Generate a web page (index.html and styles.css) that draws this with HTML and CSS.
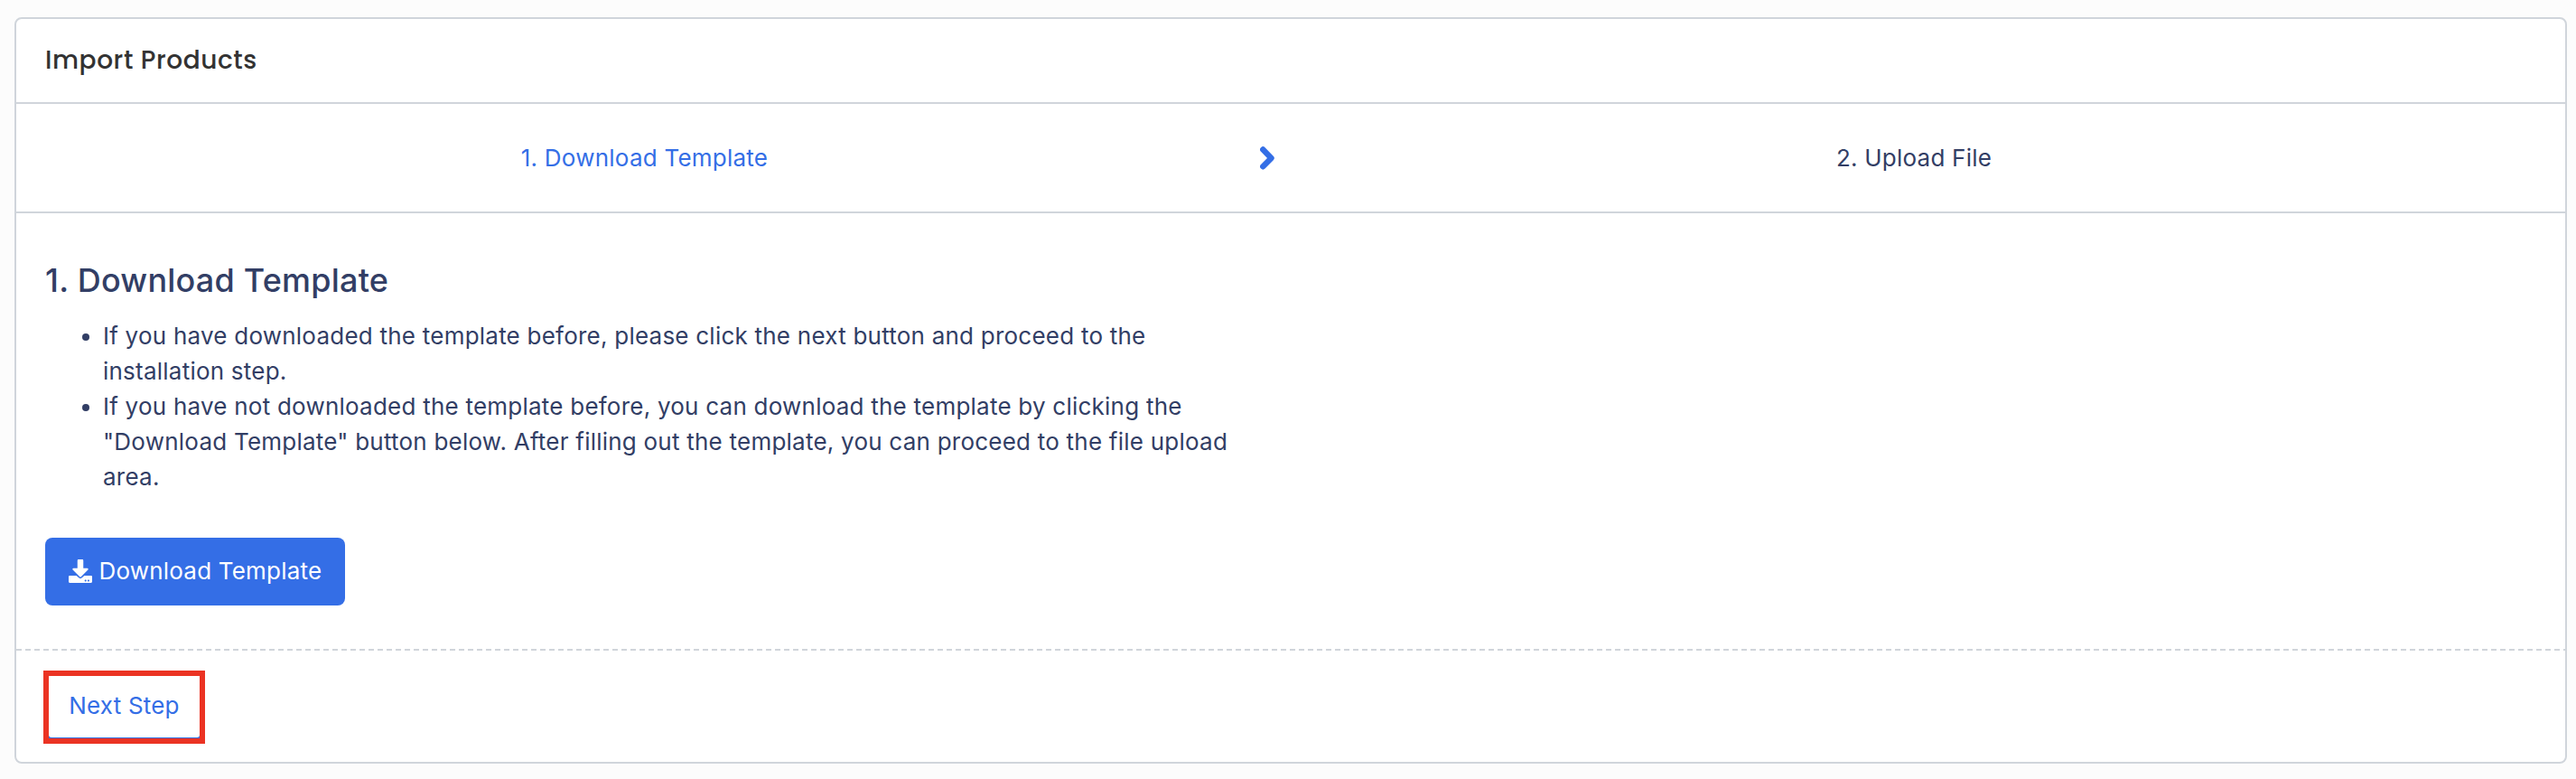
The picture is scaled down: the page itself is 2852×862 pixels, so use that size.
FILE: index.html
```html
<!DOCTYPE html>
<html lang="en">
<head>
<meta charset="utf-8">
<title>Import Products</title>
<link rel="stylesheet" href="styles.css">
</head>
<body>
<main class="card">
  <header class="card-header"><h1 class="card-title">Import Products</h1></header>
  <nav class="steps">
    <a class="step step-first active">1. Download Template</a>
    <svg class="chevron" viewBox="0 0 16 26"><path d="M3.3 3.5 12.5 12.9 3.3 22.3" fill="none" stroke="currentColor" stroke-width="6.4" stroke-linecap="round" stroke-linejoin="round"/></svg>
    <a class="step step-last">2. Upload File</a>
  </nav>
  <section class="content">
    <h2 class="heading">1. Download Template</h2>
    <ul class="notes">
      <li>If you have downloaded the template before, please click the next button and proceed to the installation step.</li>
      <li>If you have not downloaded the template before, you can download the template by clicking the "Download Template" button below. After filling out the template, you can proceed to the file upload area.</li>
    </ul>
    <button class="download">
      <svg class="download-icon" viewBox="0 0 512 512"><path fill="currentColor" d="M216 0h80c13.300 0 24 10.700 24 24v168h87.700c17.800 0 26.700 21.500 14.100 34.100L269.700 378.300c-7.500 7.500-19.800 7.500-27.300 0L90.100 226.100c-12.600-12.600-3.700-34.100 14.100-34.100H192V24c0-13.300 10.700-24 24-24zm296 376v112c0 13.300-10.700 24-24 24H24c-13.300 0-24-10.700-24-24V376c0-13.300 10.700-24 24-24h146.700l49 49c20.100 20.100 52.500 20.100 72.600 0l49-49H488c13.300 0 24 10.700 24 24zm-124 88c0-11-9-20-20-20s-20 9-20 20 9 20 20 20 20-9 20-20zm64 0c0-11-9-20-20-20s-20 9-20 20 9 20 20 20 20-9 20-20z"/></svg>
      <span>Download Template</span>
    </button>
  </section>
  <svg class="divider" width="2822" height="2"><line x1="0" y1="1" x2="2822" y2="1" stroke="#d0d5db" stroke-width="2" stroke-dasharray="6 4"/></svg>
  <footer class="card-footer">
    <div class="highlight"><button class="next">Next Step</button></div>
  </footer>
</main>
</body>
</html>
```
FILE: styles.css
```css
* { box-sizing: border-box; }
body {
  margin: 0;
  height: 862px;
  padding: 19px 10px 17px 16px;
  overflow: hidden;
  background: #fcfcfc;
  color: #323e65;
  font: 400 26px/39px Inter, "Liberation Sans", sans-serif;
  letter-spacing: 0.23px;
}
h1, h2, ul { margin: 0; padding: 0; }
.card {
  display: flex;
  flex-direction: column;
  height: 826px;
  background: #fff;
  border: 2px solid #d0d5db;
  border-radius: 8px;
}
.card-header {
  height: 94px;
  padding: 26px 32px 0;
  border-bottom: 2px solid #d0d5db;
}
.card-title {
  color: #333;
  font: 500 28px/39px Poppins, Inter, sans-serif;
  letter-spacing: 0.56px;
}
.steps {
  display: grid;
  grid-template-columns: 1377px 16px 1fr;
  align-items: center;
  height: 121px;
  border-bottom: 2px solid #d0d5db;
}
.step { text-align: center; }
.step-first { padding-left: 14px; }
.step-last { padding-right: 13px; }
.active, .chevron { color: #346ee6; }
.chevron { width: 16px; height: 26px; }
.content { height: 482px; padding: 52px 32px 0; }
.heading {
  font-size: 36px;
  font-weight: 500;
  line-height: 44px;
  letter-spacing: 0.22px;
}
.notes {
  width: 1346px;
  margin-top: 20px;
  padding-left: 64px;
}
.download {
  display: flex;
  align-items: center;
  gap: 7.5px;
  width: 332px;
  height: 75px;
  margin-top: 48px;
  padding: 0 0 2px 26px;
  border: 0;
  border-radius: 8px;
  background: #346ee6;
  color: #fff;
  font: inherit;
  letter-spacing: 0.2px;
}
.download-icon { width: 26px; height: 26px; }
.divider { display: block; flex: none; }
.card-footer { padding: 22px 30px 0; }
.highlight {
  width: 179px;
  height: 81px;
  border: 6px solid #eb3323;
  background: #346ee6;
}
.next {
  display: block;
  width: 167px;
  height: 68px;
  padding: 0 0 4px;
  border: 0;
  border-radius: 0 0 3px 3px;
  background: #fff;
  color: #346ee6;
  font: inherit;
  letter-spacing: 0.2px;
}
```
